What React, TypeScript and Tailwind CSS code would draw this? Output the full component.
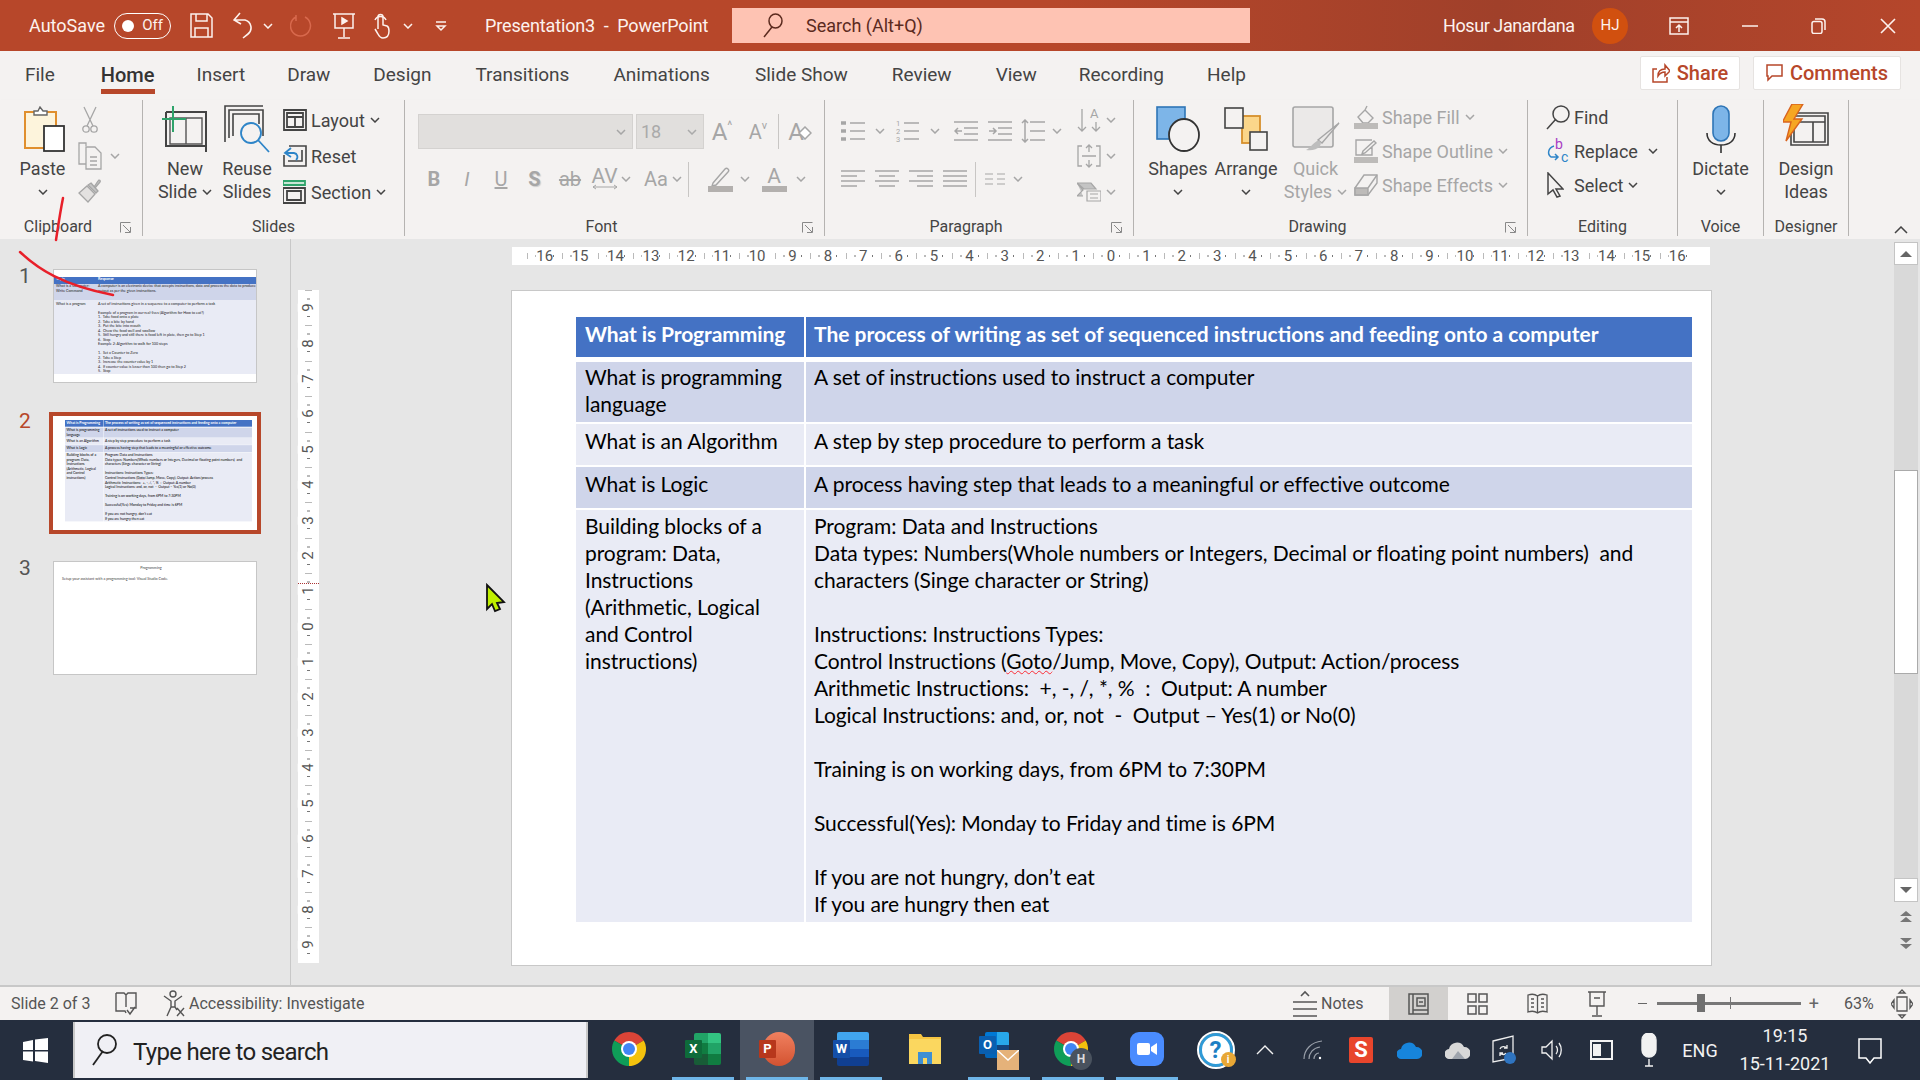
import React from "react";
import clsx from "clsx";

type P = { className?: string };

const Ic = ({ w, h, className, sw = 1.5, children }: { w: number; h: number; className?: string; sw?: number; children: React.ReactNode }) => (
  <svg width={w} height={h} viewBox={`0 0 ${w} ${h}`} fill="none" stroke="currentColor" strokeWidth={sw} className={clsx("shrink-0", className)}>
    {children}
  </svg>
);

const Chev = ({ className }: P) => (
  <Ic w={10} h={6} className={className}>
    <path d="M1 1l4 4 4-4" />
  </Ic>
);

// ---- slide content ----

const tableRows = [
  { dark: true, h: "h-[60px]", pt: "pt-[1px]", left: ["What is programming", "language"], right: ["A set of instructions used to instruct a computer"] },
  { dark: false, h: "h-[41px]", pt: "pt-[3px]", left: ["What is an Algorithm"], right: ["A step by step procedure to perform a task"] },
  { dark: true, h: "h-[41px]", pt: "pt-[3px]", left: ["What is Logic"], right: ["A process having step that leads to a meaningful or effective outcome"] },
  {
    dark: false,
    h: "h-[412px]",
    pt: "pt-[2px]",
    left: ["Building blocks of a", "program: Data,", "Instructions", "(Arithmetic, Logical", "and Control", "instructions)"],
    right: [
      "Program: Data and Instructions",
      "Data types: Numbers(Whole numbers or Integers, Decimal or floating point numbers)  and",
      "characters (Singe character or String)",
      "",
      "Instructions: Instructions Types:",
      "GOTO",
      "Arithmetic Instructions:  +, -, /, *, %  :  Output: A number",
      "Logical Instructions: and, or, not  -  Output \u2013 Yes(1) or No(0)",
      "",
      "Training is on working days, from 6PM to 7:30PM",
      "",
      "Successful(Yes): Monday to Friday and time is 6PM",
      "",
      "If you are not hungry, don\u2019t eat",
      "If you are hungry then eat",
    ],
  },
];

function Lines({ lines }: { lines: string[] }) {
  return (
    <>
      {lines.map((l, i) => (
        <div key={i} className="h-[27px] whitespace-pre">
          {l === "GOTO" ? (
            <>
              Control Instructions (<span className="underline decoration-wavy decoration-red-500 decoration-1">Goto</span>/Jump, Move, Copy), Output: Action/process
            </>
          ) : (
            l
          )}
        </div>
      ))}
    </>
  );
}

function SlideTable() {
  return (
    <div className="w-[1116px] [font-family:Lato,sans-serif] text-[21px] leading-[27px] tracking-[-0.06px] text-black">
      <div className="flex h-[40px] gap-[2px] bg-white font-bold text-white">
        <div className="w-[228px] bg-[#4472c4] pl-[9px] pt-[3px] tracking-[-0.1px] whitespace-pre">What is Programming</div>
        <div className="flex-1 bg-[#4472c4] pl-[8px] pt-[3px] tracking-[0px] whitespace-pre">
          The process of writing as set of sequenced instructions and feeding onto a computer
        </div>
      </div>
      <div className="mt-[5px] flex flex-col gap-[2px]">
        {tableRows.map((r, i) => (
          <div key={i} className={clsx("flex gap-[2px]", r.h)}>
            <div className={clsx("w-[228px] pl-[9px]", r.pt, r.dark ? "bg-[#cfd5ea]" : "bg-[#e9ebf5]")}>
              <Lines lines={r.left} />
            </div>
            <div className={clsx("flex-1 pl-[8px]", r.pt, r.dark ? "bg-[#cfd5ea]" : "bg-[#e9ebf5]")}>
              <Lines lines={r.right} />
            </div>
          </div>
        ))}
      </div>
    </div>
  );
}

function FirstThumb() {
  const steps = [
    "Example of a program in our real-lives (Algorithm for How to eat?)",
    "1.  Take food onto a plate",
    "2.  Take a bite by hand",
    "3.  Put the bite into mouth",
    "4.  Chew the food well and swallow",
    "5.  Still hungry and still there is food left in plate, then go to Step 1",
    "6.  Stop",
    "Example 2: Algorithm to walk for 100 steps",
    "",
    "1.  Set a Counter to Zero",
    "2.  Take a Step",
    "3.  Increase the counter value by 1",
    "4.  If counter value is lesser than 100 then go to Step 2",
    "5.  Stop",
  ];
  return (
    <div className="h-[114px] w-[204px] overflow-hidden border border-[#c6c6c6] bg-white pt-[7px] [font-family:Lato,sans-serif] text-[3.7px] leading-[4.5px] text-[#222]">
      <div className="flex h-[7px] font-bold text-white">
        <div className="w-[42px] bg-[#4472c4] pl-[2px]">Topic</div>
        <div className="flex-1 bg-[#4472c4] pl-[2px]">Response</div>
      </div>
      <div className="flex h-[16px] bg-[#cfd5ea]">
        <div className="w-[42px] pl-[2px]">What is a Computer: Write Command</div>
        <div className="flex-1 pl-[2px]">A computer is an electronic device that accepts instructions, data and process the data to produce output as per the given instructions.</div>
      </div>
      <div className="flex h-[74px] bg-[#e9ebf5] pt-[2px]">
        <div className="w-[42px] pl-[2px]">What is a program</div>
        <div className="flex-1 pl-[2px]">
          <div className="mb-[4px]">A set of instructions given in a sequence to a computer to perform a task</div>
          {steps.map((s, i) => (
            <div key={i} className="h-[4.5px] whitespace-pre">{s}</div>
          ))}
        </div>
      </div>
    </div>
  );
}

function ThumbPanel() {
  return (
    <div className="flex w-[291px] shrink-0 flex-col border-r border-[#c8c8c8] pt-[30px]">
      <div className="flex">
        <div className="w-[53px] pl-[19px] text-[21px] leading-[14px] text-[#555]">1</div>
        <FirstThumb />
      </div>
      <div className="mt-[29px] flex">
        <div className="w-[49px] pl-[19px] text-[21px] leading-[18px] text-[#b7472a]">2</div>
        <div className="h-[122px] w-[212px] overflow-hidden border-[4px] border-[#b7472a] bg-white pl-[12px] pt-[4px]">
          <div className="h-[102px] w-[187px] overflow-hidden">
            <div className="origin-top-left scale-[0.1676]">
              <SlideTable />
            </div>
          </div>
        </div>
      </div>
      <div className="mt-[27px] flex">
        <div className="w-[53px] pl-[19px] text-[21px] leading-[14px] text-[#555]">3</div>
        <div className="h-[114px] w-[204px] border border-[#c6c6c6] bg-white pl-[8px] pt-[3px] [font-family:Lato,sans-serif] text-[3.7px] leading-[5px] text-[#444]">
          <div className="pr-[16px] text-center">Programming</div>
          <div className="mt-[6px]">Setup your assistant with a programming tool: Visual Studio Code.</div>
        </div>
      </div>
    </div>
  );
}

// ---- rulers ----

const rulerH = [16, 15, 14, 13, 12, 11, 10, 9, 8, 7, 6, 5, 4, 3, 2, 1, 0, 1, 2, 3, 4, 5, 6, 7, 8, 9, 10, 11, 12, 13, 14, 15, 16];
const rulerV = [9, 8, 7, 6, 5, 4, 3, 2, 1, 0, 1, 2, 3, 4, 5, 6, 7, 8, 9];

function RulerH() {
  return (
    <div className="ml-[221px] flex h-[18px] w-[1198px] justify-center bg-white text-[15px] leading-[18px] text-[#555]">
      {rulerH.map((n, i) => (
        <div key={i} className="relative w-[35.4px] shrink-0 text-center">
          <svg width="36" height="18" className="absolute left-0 top-0" stroke="#777">
            <path d="M0 6v6M9 8v2M26.5 8v2" />
          </svg>
          <span className="relative bg-white">{n}</span>
        </div>
      ))}
    </div>
  );
}

function RulerV() {
  return (
    <div className="relative ml-[7px] h-[673px] w-[21px] shrink-0 bg-white text-[15px] leading-[21px] text-[#555]">
      {rulerV.map((n, i) => (
        <div key={i} className="relative flex h-[35.4px] items-center justify-center">
          <svg width="21" height="36" className="absolute left-0 top-0" stroke="#777">
            <path d="M7 0h7M9 9h3M9 26.5h3" />
          </svg>
          <span className="relative -rotate-90 bg-white">{n}</span>
        </div>
      ))}
      <div className="absolute left-0 top-[293px] w-[21px] border-t border-dotted border-[#a33]" />
    </div>
  );
}

function ScrollBar() {
  return (
    <div className="mr-[2px] flex w-[24px] shrink-0 flex-col pt-[3px]">
      <div className="flex h-[23px] items-center justify-center border border-[#c4c4c4] bg-white">
        <svg width="12" height="6"><path d="M6 0l6 6H0z" fill="#666" /></svg>
      </div>
      <div className="h-[205px] bg-[#d9d9d9]" />
      <div className="h-[204px] border border-[#aaa] bg-white" />
      <div className="h-[204px] bg-[#d9d9d9]" />
      <div className="flex h-[24px] items-center justify-center border border-[#c4c4c4] bg-white">
        <svg width="12" height="6"><path d="M6 6l6-6H0z" fill="#666" /></svg>
      </div>
      <div className="mt-[9px] flex justify-center">
        <svg width="12" height="12" fill="#777"><path d="M6 0l6 5H0zM6 6l6 5H0z" /></svg>
      </div>
      <div className="mt-[14px] flex justify-center">
        <svg width="12" height="12" fill="#777"><path d="M6 6l6-5H0zM6 12l6-5H0z" /></svg>
      </div>
    </div>
  );
}

function Workspace() {
  return (
    <div className="flex h-[748px] border-b-2 border-[#c8c8c8] bg-[#e6e6e6]">
      <ThumbPanel />
      <div className="flex flex-1 flex-col pt-[8px]">
        <RulerH />
        <div className="mt-[25px] flex">
          <RulerV />
          <div className="ml-[192px] h-[676px] w-[1201px] shrink-0 border border-[#c8c8c8] bg-white pl-[64px] pt-[26px]">
            <SlideTable />
          </div>
        </div>
      </div>
      <ScrollBar />
    </div>
  );
}

// ---- title bar ----

function TitleBar() {
  return (
    <div className="flex h-[51px] items-center bg-linear-to-r from-[#b7472a] from-55% via-[#a0402a] via-78% to-[#b5462b] pl-[29px] text-[18px] text-[#fdf2ee]">
      <span className="w-[76px]">AutoSave</span>
      <div className="ml-[9px] flex h-[26px] w-[57px] items-center justify-between rounded-full border border-white pl-[7px] pr-[7px] text-[15px]">
        <span className="h-[12px] w-[12px] rounded-full bg-white" />
        <span>Off</span>
      </div>
      <Ic w={23} h={25} className="ml-[19px]">
        <path d="M1 1h17l4 4v19H1zM6 1v7h11V1M5 24v-9h13v9" />
      </Ic>
      <Ic w={23} h={27} className="ml-[20px]" sw={1.6}>
        <path d="M7 1L1 8l7 4M1 8h11a8 8 0 0 1 3 14l-5 4" />
      </Ic>
      <Chev className="ml-[7px]" />
      <Ic w={23} h={24} className="ml-[17px] text-[#d8694d]">
        <path d="M15 3a10 10 0 1 1-9 0M6 1v6" />
      </Ic>
      <Ic w={22} h={26} className="ml-[20px]">
        <path d="M0 1h22M2 1v14h18V1M11 15v9M5 25h12" />
        <path d="M9 5l5 3-5 3z" fill="currentColor" />
      </Ic>
      <Ic w={18} h={27} className="ml-[17px]">
        <path d="M6 17V5a2.5 2.5 0 0 1 5 0v8l4 1c2 1 2 3 2 5 0 4-2 7-6 7-3 0-4-2-5-4l-3-5" />
        <path d="M3 8a6 6 0 0 1 11 0" />
      </Ic>
      <Chev className="ml-[13px]" />
      <Ic w={12} h={12} className="ml-[22px]">
        <path d="M1 2h10M2 6h8l-4 4z" />
      </Ic>
      <span className="ml-[38px] w-[247px] whitespace-pre tracking-[-0.14px]">Presentation3  -  PowerPoint</span>
      <div className="flex h-[35px] w-[518px] items-center bg-[#fec3b3] text-[#5b2a1e]">
        <Ic w={20} h={25} className="ml-[31px]">
          <path d="M1 24l8-10" />
          <ellipse cx="12.5" cy="8" rx="6.5" ry="7" />
        </Ic>
        <span className="ml-[23px]">Search (Alt+Q)</span>
      </div>
      <span className="ml-[193px] w-[133px] whitespace-nowrap tracking-[-0.42px]">Hosur Janardana</span>
      <div className="ml-[16px] flex h-[36px] w-[36px] items-center justify-center rounded-full bg-[#d1500f] text-[15px]">HJ</div>
      <Ic w={20} h={18} className="ml-[41px]">
        <path d="M1 1h18v16H1zM1 5h18M10 15V8M7 11l3-3 3 3" />
      </Ic>
      <Ic w={16} h={2} className="ml-[53px]">
        <path d="M0 1h16" />
      </Ic>
      <Ic w={15} h={16} className="ml-[53px]">
        <rect x="1" y="3.5" width="10" height="12" rx="2" />
        <path d="M4 1h7a3 3 0 0 1 3 3v8" />
      </Ic>
      <Ic w={16} h={16} className="ml-[54px]" sw={1.6}>
        <path d="M1 1l14 14M15 1L1 15" />
      </Ic>
    </div>
  );
}

const tabs = [
  ["File", "ml-[25px]"],
  ["Home", "ml-[46px]"],
  ["Insert", "ml-[42px]"],
  ["Draw", "ml-[42px]"],
  ["Design", "ml-[43px]"],
  ["Transitions", "ml-[44px]"],
  ["Animations", "ml-[44px]"],
  ["Slide Show", "ml-[45px]"],
  ["Review", "ml-[44px]"],
  ["View", "ml-[44px]"],
  ["Recording", "ml-[42px]"],
  ["Help", "ml-[43px]"],
];

function TabRow() {
  return (
    <div className="flex h-[49px] bg-[#f4f2f1] text-[#444] text-[19px]">
      {tabs.map(([t, m]) => (
        <div
          key={t}
          className={clsx(
            "flex h-[43px] items-center whitespace-nowrap pt-[5px]",
            m,
            t === "Home" && "border-b-[5px] border-[#b7472a] pt-[10px] text-[20px] font-medium text-[#333]"
          )}
        >
          {t}
        </div>
      ))}
      <div className="ml-auto mr-[19px] mt-[5px] flex h-[34px] gap-[13px] text-[20px] font-medium text-[#b7472a]">
        <div className="flex w-[100px] items-center justify-center gap-[7px] rounded-[2px] border border-[#e6e3e1] bg-white">
          <Ic w={18} h={20}>
            <path d="M5 6H1v13h14v-5M6 13c0-5 3-7 7-7V2l5 6-5 5V9c-3 0-5 1-7 4z" />
          </Ic>
          Share
        </div>
        <div className="flex w-[148px] items-center justify-center gap-[7px] rounded-[2px] border border-[#e6e3e1] bg-white">
          <Ic w={17} h={18}>
            <path d="M1 1h15v11H6l-4 4v-4H1z" />
          </Ic>
          Comments
        </div>
      </div>
    </div>
  );
}

// ---- ribbon ----

const Launcher = () => (
  <Ic w={11} h={11} sw={1} className="text-[#888]">
    <path d="M0.5 10.5v-10h10M3 3l7 7M10.5 5v5.5H5" />
  </Ic>
);

function Group({ className, label, launcher, children }: { className: string; label: string; launcher?: boolean; children: React.ReactNode }) {
  return (
    <div className={clsx("flex h-[136px] shrink-0 flex-col border-r border-[#b5b3b1]", className)}>
      <div className="flex h-[118px]">{children}</div>
      <div className="flex h-[18px] items-center text-[16px] leading-[18px] text-[#444]">
        <span className={clsx("flex-1 text-center", launcher && "ml-[-4px]")}>{label}</span>
        {launcher && (
          <span className="mr-[4px] w-[18px]">
            <Launcher />
          </span>
        )}
      </div>
    </div>
  );
}

function BigButton({ className, icon, lines, chev, dim }: { className?: string; icon: React.ReactNode; lines: string[]; chev?: boolean; dim?: boolean }) {
  return (
    <div className={clsx("flex shrink-0 flex-col items-center leading-[23px]", dim && "text-[#a6a6a6]", className)}>
      <div className="flex h-[57px] items-center justify-center">{icon}</div>
      {lines.map((l, i) => (
        <div key={i} className="flex h-[23px] items-center gap-[5px] whitespace-nowrap">
          {l}
          {chev && i === 1 && <Chev />}
        </div>
      ))}
      {lines.length === 1 && (
        <div className="flex h-[23px] items-center">
          <Chev />
        </div>
      )}
    </div>
  );
}

function SmallRow({ icon, label, chev, className }: { icon: React.ReactNode; label: string; chev?: boolean; className?: string }) {
  return (
    <div className={clsx("flex items-center whitespace-nowrap", className)}>
      <span className="flex w-[28px] shrink-0 justify-start">{icon}</span>
      {label}
      {chev && <Chev className="ml-[5px]" />}
    </div>
  );
}

const G = ({ w, children, className }: { w: string; children?: React.ReactNode; className?: string }) => (
  <span className={clsx("flex shrink-0 items-center justify-center", w, className)}>{children}</span>
);

function BulletIcon({ numbered }: { numbered?: boolean }) {
  return (
    <Ic w={24} h={24} sw={1.5}>
      <path d="M9 4h15M9 12h15M9 20h15" />
      {numbered ? (
        <g fill="currentColor" stroke="none" fontSize="7.5">
          <text x="1" y="7">1</text>
          <text x="1" y="15">2</text>
          <text x="1" y="23">3</text>
        </g>
      ) : (
        <path d="M0 4h5M0 12h5M0 20h5" strokeWidth="3.5" />
      )}
    </Ic>
  );
}

function AlignIcon({ d }: { d: string }) {
  return (
    <Ic w={24} h={20}>
      <path d={d} />
    </Ic>
  );
}

function Ribbon() {
  return (
    <div className="flex h-[139px] bg-[#f4f2f1] text-[18px] text-[#444] shadow-[0_3px_4px_rgba(0,0,0,0.12)]">
      <Group className="w-[143px]" label="Clipboard" launcher>
        <BigButton
          className="ml-[21px] w-[43px]"
          lines={["Paste"]}
          icon={
            <svg width="42" height="46" fill="none" className="ml-[5px]">
              <rect x="1" y="6" width="31" height="36" fill="#fdf4dc" stroke="#e08f2e" strokeWidth="2" />
              <path d="M10 9V5h4l2-4 3 4h4v4z" fill="#fff" stroke="#666" strokeWidth="1.4" />
              <rect x="20" y="20" width="20" height="25" fill="#fff" stroke="#333" strokeWidth="1.8" />
            </svg>
          }
        />
        <div className="ml-[9px] mt-[2px] flex w-[52px] flex-col text-[#a6a6a6]">
          <G w="w-[34px]" className="h-[36px]">
            <Ic w={16} h={28} sw={1.3}>
              <path d="M2 1l9 19M14 1L5 20" />
              <circle cx="4" cy="23" r="3.2" />
              <circle cx="12" cy="23" r="3.2" />
            </Ic>
          </G>
          <div className="flex h-[36px] items-center">
            <G w="w-[34px]">
              <Ic w={24} h={28} sw={1.3}>
                <path d="M8 4V1H1v21h7M8 5h9l6 6v16H8zM12 15h7M12 19h7M12 23h7" />
              </Ic>
            </G>
            <Chev className="ml-[3px]" />
          </div>
          <G w="w-[34px]" className="h-[32px]">
            <svg width="24" height="25" fill="none" stroke="#a6a6a6" strokeWidth="1.3">
              <path d="M16 9l4-6c1-2 3 0 2 1l-5 6z" fill="#c4c4c4" />
              <path d="M13 5l7 8-2 2-8-8z" fill="#c4c4c4" />
              <path d="M9 8l8 8-7 8-9-9z" fill="#e3e1e0" />
            </svg>
          </G>
        </div>
      </Group>

      <Group className="w-[262px]" label="Slides">
        <BigButton
          className="ml-[11px] w-[62px]"
          lines={["New", "Slide"]}
          chev
          icon={
            <svg width="46" height="46" fill="none">
              <path d="M4 8h40v40M4 8v34h40" stroke="#444" strokeWidth="2" transform="translate(0 -2)" />
              <path d="M8 12h32v26H8zM24 12v26" stroke="#555" strokeWidth="1.4" />
              <path d="M11 0v26M0 13h24" stroke="#2fa36b" strokeWidth="2" />
            </svg>
          }
        />
        <BigButton
          className="w-[62px]"
          lines={["Reuse", "Slides"]}
          icon={
            <svg width="46" height="50" fill="none" stroke="#444" strokeWidth="1.6">
              <path d="M1 38V2h38M5 34V6h34v26" />
              <path d="M9 32V10h26v10" />
              <circle cx="27" cy="29" r="10" stroke="#2e85c8" fill="#f4f2f1" strokeWidth="1.8" />
              <path d="M34 36l11 12" stroke="#2e85c8" strokeWidth="1.8" />
            </svg>
          }
        />
        <div className="ml-[5px] mt-[2px] flex flex-col">
          <SmallRow
            className="h-[36px]"
            label="Layout"
            chev
            icon={
              <Ic w={24} h={22} sw={1.8}>
                <path d="M1 1h22v20H1zM4 4h16v14H4zM4 8h16M12 8v10" />
              </Ic>
            }
          />
          <SmallRow
            className="h-[36px]"
            label="Reset"
            icon={
              <svg width="24" height="22" fill="none" stroke="#444" strokeWidth="1.6">
                <path d="M6 1h17v20H1V10M5 16h14V5" />
                <path d="M8 3L2 8l6 4M2 8h9a4 4 0 0 1 2 7" stroke="#2e85c8" strokeWidth="1.8" />
              </svg>
            }
          />
          <SmallRow
            className="h-[36px]"
            label="Section"
            chev
            icon={
              <svg width="24" height="24" fill="none" strokeWidth="1.8">
                <path d="M0 1h22v4H0z" stroke="#2fa36b" fill="#c9e6d5" />
                <path d="M0 8h22v15H0zM4 11h14v9H4z" stroke="#444" />
              </svg>
            }
          />
        </div>
      </Group>

      <Group className="w-[420px]" label="Font" launcher>
        <div className="ml-[13px] flex flex-col text-[#a6a6a6]">
          <div className="mt-[14px] flex h-[35px] items-center">
            <div className="flex h-[35px] w-[215px] items-center justify-end border border-[#d4d2d0] bg-[#e1dfdd] pr-[6px]">
              <Chev />
            </div>
            <div className="ml-[3px] flex h-[35px] w-[68px] items-center justify-between border border-[#d4d2d0] bg-[#e1dfdd] pl-[4px] pr-[6px] text-[#aaa]">
              18
              <Chev />
            </div>
            <G w="w-[34px]" className="ml-[1px] text-[24px]">
              A<sup className="text-[12px]">^</sup>
            </G>
            <G w="w-[34px]" className="ml-[2px] text-[20px]">
              A<sup className="text-[11px]">v</sup>
            </G>
            <span className="ml-[3px] h-[35px] w-px bg-[#c8c6c4]" />
            <G w="w-[34px]" className="text-[24px]">
              <span className="relative">
                A
                <svg width="14" height="14" className="absolute -right-[8px] top-[12px]">
                  <path d="M1 7l6-6 6 6-6 6z" fill="#fff" stroke="#a6a6a6" strokeWidth="1.5" />
                </svg>
              </span>
            </G>
          </div>
          <div className="mt-[12px] flex h-[36px] items-center text-[20px]">
            <G w="w-[32px]" className="font-bold">B</G>
            <G w="w-[34px]" className="italic">I</G>
            <G w="w-[34px]" className="underline">U</G>
            <G w="w-[33px]" className="font-bold [text-shadow:1px_1px_1px_#ccc]">S</G>
            <G w="w-[38px]" className="line-through">ab</G>
            <G w="w-[31px]">
              <span className="flex flex-col items-center text-[21px] leading-[17px]">
                AV
                <Ic w={24} h={6} sw={1} className="-mt-[1px]">
                  <path d="M0 3h24M3 1L0 3l3 2M21 1l3 2-3 2" />
                </Ic>
              </span>
            </G>
            <Chev className="ml-[1px]" />
            <G w="w-[32px]" className="ml-[9px]">Aa</G>
            <Chev className="ml-[0px]" />
            <span className="ml-[6px] h-[35px] w-px bg-[#c8c6c4]" />
            <G w="w-[38px]" className="ml-[12px]">
              <svg width="25" height="26" fill="none">
                <path d="M5 17L17 3c2-2 5 1 3 3L8 19l-4 1z" stroke="#a6a6a6" strokeWidth="1.4" />
                <rect x="0" y="20" width="25" height="6" fill="#b3b0ae" />
              </svg>
            </G>
            <Chev className="ml-[1px]" />
            <G w="w-[26px]" className="ml-[11px]">
              <span className="relative flex flex-col items-center text-[21px] leading-[20px]">
                A
                <span className="h-[6px] w-[25px] bg-[#b3b0ae]" />
              </span>
            </G>
            <Chev className="ml-[9px]" />
          </div>
        </div>
      </Group>

      <Group className="w-[309px]" label="Paragraph" launcher>
        <div className="ml-[16px] flex w-[236px] flex-col text-[#a6a6a6]">
          <div className="mt-[18px] flex h-[26px] items-center">
            <BulletIcon />
            <Chev className="ml-[10px]" />
            <span className="ml-[10px]"><BulletIcon numbered /></span>
            <Chev className="ml-[11px]" />
            <Ic w={24} h={24} className="ml-[14px]">
              <path d="M0 3h24M10 9h14M10 15h14M0 21h24M8 12H1M4 9l-3 3 3 3" />
            </Ic>
            <Ic w={24} h={24} className="ml-[10px]">
              <path d="M0 3h24M10 9h14M10 15h14M0 21h24M1 12h7M5 9l3 3-3 3" />
            </Ic>
            <Ic w={24} h={24} className="ml-[9px]">
              <path d="M9 3h15M9 12h15M9 21h15M4 1v22M1 4l3-3 3 3M1 20l3 3 3-3" />
            </Ic>
            <Chev className="ml-[7px]" />
          </div>
          <div className="mt-[22px] flex h-[26px] items-center">
            <AlignIcon d="M0 2h24M0 7h16M0 12h24M0 17h16" />
            <span className="ml-[10px]"><AlignIcon d="M0 2h24M4 7h16M0 12h24M4 17h16" /></span>
            <span className="ml-[10px]"><AlignIcon d="M0 2h24M8 7h16M0 12h24M8 17h16" /></span>
            <span className="ml-[10px]"><AlignIcon d="M0 2h24M0 7h24M0 12h24M0 17h24" /></span>
            <span className="ml-[8px] h-[35px] w-px bg-[#c8c6c4]" />
            <Ic w={20} h={14} sw={1.2} className="ml-[9px]">
              <path d="M0 2h8M12 2h8M0 7h8M12 7h8M0 12h8M12 12h8" />
            </Ic>
            <Chev className="ml-[8px]" />
          </div>
        </div>
        <div className="mt-[2px] flex flex-col text-[#a6a6a6]">
          <div className="flex h-[36px] items-center gap-[5px]">
            <Ic w={24} h={28} sw={1.3}>
              <path d="M5 3v22M1 21l4 4 4-4M19 16v9M15 21l4 4 4-4" />
              <text x="13" y="12" fontSize="13" fill="#a6a6a6" stroke="none">A</text>
            </Ic>
            <Chev />
          </div>
          <div className="flex h-[36px] items-center gap-[5px]">
            <Ic w={24} h={24} sw={1.3}>
              <path d="M5 2H1v20h4M19 2h4v20h-4M5 12h14M12 1v7M9 4l3-3 3 3M12 23v-7M9 20l3 3 3-3" />
            </Ic>
            <Chev />
          </div>
          <div className="flex h-[36px] items-center gap-[5px]">
            <Ic w={24} h={20} sw={1.2}>
              <path d="M0 1h14l5 6H7zM0 1l6 7-6 6h6" fill="#c4c4c4" />
              <path d="M10 9h14v10H10zM13 12h8M13 16h8" fill="#f4f2f1" />
            </Ic>
            <Chev />
          </div>
        </div>
      </Group>

      <Group className="w-[394px]" label="Drawing" launcher>
        <BigButton
          className="ml-[10px] w-[68px]"
          lines={["Shapes"]}
          icon={
            <svg width="44" height="46">
              <rect x="1" y="1" width="28" height="32" fill="#7db5e8" stroke="#2e75b6" strokeWidth="1.6" />
              <ellipse cx="28" cy="29" rx="15" ry="16" fill="#f4f2f1" stroke="#333" strokeWidth="1.8" />
            </svg>
          }
        />
        <BigButton
          className="w-[68px]"
          lines={["Arrange"]}
          icon={
            <svg width="44" height="44" fill="none">
              <rect x="18" y="9" width="18" height="27" fill="#fbd68a" stroke="#d6902c" strokeWidth="1.8" />
              <rect x="1" y="1" width="18" height="20" fill="#f4f2f1" stroke="#444" strokeWidth="1.6" />
              <rect x="26" y="25" width="17" height="18" fill="#f4f2f1" stroke="#444" strokeWidth="1.6" />
            </svg>
          }
        />
        <BigButton
          dim
          className="w-[71px]"
          lines={["Quick", "Styles"]}
          chev
          icon={
            <svg width="48" height="48" fill="none">
              <rect x="1" y="2" width="40" height="40" rx="2" fill="#ebe9e8" stroke="#a6a6a6" strokeWidth="1.6" />
              <path d="M47 18L30 38l-4-3z" fill="#ebe9e8" stroke="#a6a6a6" strokeWidth="1.4" />
              <path d="M25 36c3-1 5 2 3 5-3 4-9 5-14 4 4-2 6-6 11-9z" fill="#bdbdbd" />
            </svg>
          }
        />
        <div className="ml-[3px] flex flex-col text-[#a6a6a6]">
          <SmallRow
            className="h-[34px]"
            label="Shape Fill"
            chev
            icon={
              <svg width="24" height="24" fill="none" stroke="#a6a6a6" strokeWidth="1.4">
                <path d="M4 12l7-7 8 8-5 5H9zM11 5l2-4" />
                <rect x="0" y="18" width="24" height="6" fill="#bdbbb9" stroke="none" />
              </svg>
            }
          />
          <SmallRow
            className="h-[34px]"
            label="Shape Outline"
            chev
            icon={
              <svg width="24" height="24" fill="none" stroke="#a6a6a6" strokeWidth="1.4">
                <path d="M18 1H2v15h16V8M9 12L20 2l2 2-11 10-3 1z" />
                <rect x="0" y="18" width="24" height="6" fill="#bdbbb9" stroke="none" />
              </svg>
            }
          />
          <SmallRow
            className="h-[34px]"
            label="Shape Effects"
            chev
            icon={
              <svg width="24" height="22" stroke="#a6a6a6" strokeWidth="1.4">
                <path d="M1 14L10 1h13v8l-9 12H1z" fill="#f4f2f1" />
                <path d="M1 14h13v7H1zM14 14l9-13" fill="#bdbbb9" />
              </svg>
            }
          />
        </div>
      </Group>

      <Group className="w-[150px]" label="Editing">
        <div className="ml-[18px] flex flex-col">
          <SmallRow
            className="h-[34px]"
            label="Find"
            icon={
              <Ic w={24} h={25}>
                <path d="M1 24l9-10" />
                <ellipse cx="15" cy="9" rx="8" ry="8" />
              </Ic>
            }
          />
          <SmallRow
            className="h-[34px]"
            label="Replace"
            icon={
              <svg width="24" height="26" fill="none" strokeWidth="1.5">
                <text x="9" y="11" fontSize="14" fill="#a83cc4" stroke="none">b</text>
                <text x="15" y="24" fontSize="14" fill="#2e85c8" stroke="none">c</text>
                <path d="M8 8C2 10 1 16 5 19h7M9 16l3 3-3 3" stroke="#2e85c8" />
              </svg>
            }
          />
          <SmallRow
            className="h-[34px]"
            label="Select"
            chev
            icon={
              <Ic w={18} h={26}>
                <path d="M2 1v21l5-4 4 7 3-1-4-7h7z" />
              </Ic>
            }
          />
        </div>
        <Chev className="ml-[10px] mt-[48px]" />
      </Group>

      <Group className="w-[86px]" label="Voice">
        <BigButton
          className="w-[85px]"
          lines={["Dictate"]}
          icon={
            <svg width="30" height="48" fill="none">
              <rect x="7" y="1" width="16" height="35" rx="8" fill="#7db5e8" stroke="#2e75b6" strokeWidth="1.6" />
              <path d="M1 28c0 8 6 12 14 12s14-4 14-12M15 40v8" stroke="#333" strokeWidth="1.6" />
            </svg>
          }
        />
      </Group>

      <Group className="w-[85px]" label="Designer">
        <BigButton
          className="w-[84px]"
          lines={["Design", "Ideas"]}
          icon={
            <svg width="46" height="50" fill="none">
              <path d="M8 9h37v32H8zM11 12h31v26H11zM11 18h31M30 18v20" stroke="#444" strokeWidth="1.6" />
              <path d="M20 0H9L0 17l0 1h8L3 37l16-22h-8z" fill="#f6a623" stroke="#d9641e" strokeWidth="1.4" />
            </svg>
          }
        />
      </Group>

      <div className="flex flex-1 items-end justify-end pb-[5px] pr-[12px]">
        <Ic w={14} h={8}>
          <path d="M1 7l6-6 6 6" />
        </Ic>
      </div>
    </div>
  );
}

// ---- status bar ----

function StatusBar() {
  return (
    <div className="flex h-[33px] items-center bg-[#f4f2f1] text-[16px] text-[#555]">
      <span className="ml-[11px] w-[77px] whitespace-nowrap">Slide 2 of 3</span>
      <Ic w={22} h={26} className="ml-[27px]" sw={1.4}>
        <path d="M1 2h8l2 2 2-2h8v15l-6 0M1 2v18h9l1 2M11 4v12M12 19l3 4 5-7" />
      </Ic>
      <Ic w={24} h={28} className="ml-[25px]" sw={1.4}>
        <circle cx="11" cy="4" r="3" />
        <path d="M2 6l7 5v6l-4 9M20 6l-7 5v6l2 3M9 17h4M15 18l7 8M22 18l-7 8" />
      </Ic>
      <span className="ml-[3px] whitespace-nowrap">Accessibility: Investigate</span>

      <Ic w={24} h={28} className="ml-auto" sw={1.6}>
        <path d="M8 6l4-4 4 4M0 12h24M0 19h24M0 26h24" />
      </Ic>
      <span className="ml-[4px] w-[68px]">Notes</span>
      <div className="flex h-[33px] w-[59px] items-center justify-center bg-[#d2d0ce]">
        <Ic w={21} h={22} sw={1.5}>
          <path d="M1 1h19v20H1zM5 1v20M5 17h15M9 5h8v8H9zM11 9h4" />
        </Ic>
      </div>
      <div className="flex w-[59px] justify-center">
        <Ic w={21} h={22} sw={1.5}>
          <path d="M1 1h8v8H1zM12 1h8v8h-8zM1 13h8v8H1zM12 13h8v8h-8z" />
        </Ic>
      </div>
      <div className="flex w-[60px] justify-center">
        <Ic w={21} h={22} sw={1.3}>
          <path d="M10.5 3C8 1 4 1 1 2v17c3-1 7-1 9.5 1 2.5-2 6.500-2 9.500-1V2c-3-1-7-1-9.500 1zM10.500 3v17M4 6h3M4 10h3M4 14h3M14 6h3M14 10h3M14 14h3" />
        </Ic>
      </div>
      <div className="flex w-[60px] justify-center">
        <Ic w={20} h={26} sw={1.4}>
          <path d="M1 1h18M3 1v14h14V1M10 15v9M5 25h10M7 7h6" />
        </Ic>
      </div>
      <div className="ml-[11px] flex w-[181px] items-center text-[#666]">
        <span className="h-[1.5px] w-[9px] bg-[#666]" />
        <div className="relative ml-[10px] h-[3px] w-[148px] bg-[#777]">
          <span className="absolute left-[40px] top-[-8px] h-[18px] w-[8px] bg-[#707070]" />
          <span className="absolute left-[73px] top-[-5px] h-[12px] w-[1.5px] bg-[#777]" />
        </div>
        <span className="ml-[8px] text-[18px] leading-none">+</span>
      </div>
      <span className="ml-[25px] w-[47px] whitespace-nowrap">63%</span>
      <Ic w={22} h={30} className="mr-[7px]" sw={1.3}>
        <path d="M6 8h10v14H6zM11 1L8 4h6zM11 29l-3-3h6zM3 11l-3 4 3 4zM19 11l3 4-3 4z" />
      </Ic>
    </div>
  );
}

// ---- taskbar ----

const Tile = ({ letter, className }: { letter: string; className: string }) => (
  <span className={clsx("flex h-[18px] w-[17px] items-center justify-center rounded-[1px] text-[13px] font-bold leading-none text-white", className)}>{letter}</span>
);

function TbApp({ children, open, active }: { children: React.ReactNode; open?: boolean; active?: boolean }) {
  return (
    <div className={clsx("flex h-[60px] w-[74px] shrink-0 flex-col items-center", active && "bg-[#4a5362]")}>
      <div className="flex h-[57px] items-center justify-center">{children}</div>
      {open && <div className="h-[3px] w-[62px] bg-[#6eb5e8]" />}
    </div>
  );
}

const ChromeLogo = () => (
  <svg width="34" height="34" viewBox="0 0 34 34">
    <path d="M17 17L2.28 8.500A17 17 0 0 1 31.720 8.500Z" fill="#db4437" />
    <path d="M17 17L31.720 8.500A17 17 0 0 1 17 34Z" fill="#f4c20d" />
    <path d="M17 17L17 34A17 17 0 0 1 2.280 8.500Z" fill="#0f9d58" />
    <circle cx="17" cy="17" r="8" fill="#fff" />
    <circle cx="17" cy="17" r="6" fill="#4285f4" />
  </svg>
);

const Tray = ({ children }: { children: React.ReactNode }) => <div className="flex h-[60px] w-[48px] shrink-0 items-center justify-center text-[#f2f2f2]">{children}</div>;

function Taskbar() {
  return (
    <div className="flex h-[60px] bg-[#252e3e] text-white">
      <div className="flex w-[73px] items-center justify-center pr-[3px]">
        <svg width="25" height="25" fill="#fff">
          <path d="M0 4l10-2v10H0zM12 1.500L25 0v12H12zM0 13.500h10v10L0 22zM12 13.500h13V25l-13-2z" />
        </svg>
      </div>
      <div className="flex h-[56px] w-[515px] items-center self-center border-x-2 border-[#c8c8c8] bg-[#f0f0f5] pl-[17px] text-[24px] text-[#222]">
        <Ic w={25} h={32} sw={1.8}>
          <path d="M1 31l10-14" />
          <ellipse cx="15" cy="10" rx="9" ry="9" />
        </Ic>
        <span className="ml-[16px] whitespace-nowrap pt-[4px] tracking-[-0.7px]">Type here to search</span>
      </div>
      <div className="w-[4px]" />
      <TbApp>
        <ChromeLogo />
      </TbApp>
      <TbApp open>
        <span className="relative flex h-[32px] w-[36px] items-center">
          <span className="ml-[9px] grid h-[32px] w-[27px] grid-cols-2 grid-rows-3 overflow-hidden rounded-[2px]">
            <span className="bg-[#21a366]" />
            <span className="bg-[#33c481]" />
            <span className="bg-[#107c41]" />
            <span className="bg-[#21a366]" />
            <span className="bg-[#185c37]" />
            <span className="bg-[#107c41]" />
          </span>
          <Tile letter="X" className="absolute left-0 top-[7px] bg-[#0e6b3a]" />
        </span>
      </TbApp>
      <TbApp open active>
        <span className="relative flex h-[34px] w-[36px] items-center">
          <span className="ml-[4px] h-[34px] w-[32px] rounded-full bg-linear-to-b from-[#f0805f] to-[#d35230]" />
          <Tile letter="P" className="absolute left-0 top-[8px] bg-[#b7371c]" />
        </span>
      </TbApp>
      <TbApp open>
        <span className="relative flex h-[34px] w-[36px] items-center">
          <span className="ml-[4px] flex h-[34px] w-[32px] flex-col overflow-hidden rounded-[2px]">
            <span className="flex-1 bg-[#41a5ee]" />
            <span className="flex-1 bg-[#2b7cd3]" />
            <span className="flex-1 bg-[#185abd]" />
            <span className="flex-1 bg-[#103f91]" />
          </span>
          <Tile letter="W" className="absolute left-0 top-[8px] bg-[#144fa8]" />
        </span>
      </TbApp>
      <TbApp>
        <svg width="32" height="30">
          <path d="M0 0h12l2 3h18v27H0z" fill="#f6c542" />
          <path d="M0 5h32v25H0z" fill="#fbd75f" />
          <path d="M9 30V18h14v12h-5v-6h-4v6z" fill="#3e8fd4" />
        </svg>
      </TbApp>
      <TbApp open>
        <span className="relative flex h-[34px] w-[40px] items-center">
          <span className="ml-[6px] mb-[8px] grid h-[26px] w-[24px] grid-cols-2 overflow-hidden rounded-[2px]">
            <span className="bg-[#0078d4]" />
            <span className="bg-[#28a8ea]" />
            <span className="bg-[#0364b8]" />
            <span className="bg-[#14447d]" />
          </span>
          <Tile letter="O" className="absolute left-0 top-[4px] bg-[#0a5fb0]" />
          <svg width="22" height="20" className="absolute bottom-[-4px] right-0">
            <path d="M0 0h22v20H0z" fill="#e5b27a" />
            <path d="M0 0l11 10L22 0" fill="none" stroke="#fff" strokeWidth="1.4" />
          </svg>
        </span>
      </TbApp>
      <TbApp open>
        <span className="relative h-[34px] w-[38px]">
          <ChromeLogo />
          <span className="absolute bottom-[-4px] right-0 flex h-[22px] w-[22px] items-center justify-center rounded-full bg-[#49525e] text-[12px] font-bold text-[#ddd]">H</span>
        </span>
      </TbApp>
      <TbApp open>
        <span className="flex h-[34px] w-[34px] items-center justify-center rounded-[9px] bg-[#4a8cff]">
          <svg width="20" height="12" fill="#fff">
            <rect width="13" height="12" rx="2" />
            <path d="M14 4l6-4v12l-6-4z" />
          </svg>
        </span>
      </TbApp>
      <div className="flex w-[57px] shrink-0 items-center justify-center pl-[6px]">
        <span className="relative flex h-[34px] w-[34px] items-center justify-center rounded-full border-[3px] border-[#2f9ad6] bg-white text-[24px] font-bold leading-none text-[#1d7fc4] outline-2 outline-white">
          ?
          <span className="absolute bottom-[-3px] right-[-6px] flex h-[15px] w-[15px] items-center justify-center rounded-full bg-[#e8a735] text-[10px] text-white">i</span>
        </span>
      </div>
      <Tray>
        <Ic w={18} h={10} sw={1.4}>
          <path d="M1 9l8-8 8 8" />
        </Ic>
      </Tray>
      <Tray>
        <Ic w={20} h={20} sw={1.2} className="text-[#9aa0aa]">
          <path d="M1 19C1 10 8 2 19 1M6 19c0-6 4-11 11-12M11 19c0-3 2-6 5-6" />
          <circle cx="17" cy="18" r="1.200" fill="#fff" stroke="none" />
        </Ic>
      </Tray>
      <Tray>
        <span className="flex h-[26px] w-[24px] items-center justify-center rounded-[2px] bg-[#e8452c] text-[22px] font-bold leading-none text-white">S</span>
      </Tray>
      <Tray>
        <svg width="25" height="18" fill="#1785dc">
          <path d="M5 18a5 5 0 0 1-1-10 8 8 0 0 1 15-2 6 6 0 0 1 1 12z" />
        </svg>
      </Tray>
      <Tray>
        <svg width="25" height="18">
          <path d="M5 18a5 5 0 0 1-1-10 8 8 0 0 1 15-2 6 6 0 0 1 1 12z" fill="#d8d8d8" />
          <path d="M7 18l6-8 7 8z" fill="#9ea4ad" />
        </svg>
      </Tray>
      <Tray>
        <svg width="26" height="30" fill="none" stroke="#eee" strokeWidth="1.300">
          <path d="M1 6l20-5v22l-20 4zM8 14c1-3 5-3 7-1M15 10v3h-3M14 18c-1 2-4 2-6 0M8 21v-3h3" />
          <circle cx="18" cy="23" r="6" fill="#2f74c0" stroke="none" />
        </svg>
      </Tray>
      <Tray>
        <Ic w={24} h={24} sw={1.300}>
          <path d="M1 9h4l6-6v18l-6-6H1zM15 8c2 2 2 6 0 8M18 5c3 4 3 10 0 14" />
        </Ic>
      </Tray>
      <Tray>
        <span className="flex h-[20px] w-[23px] items-center border-2 border-[#f2f2f2] pl-[1px]">
          <span className="h-[12px] w-[8px] bg-[#f2f2f2]" />
        </span>
      </Tray>
      <Tray>
        <svg width="16" height="34" fill="none" stroke="#f2f2f2" strokeWidth="1.400">
          <rect x="1" y="0" width="14" height="24" rx="7" fill="#f2f2f2" />
          <path d="M8 26v7M4 33h8" />
        </svg>
      </Tray>
      <div className="flex w-[54px] shrink-0 items-center justify-center text-[18px] text-[#f2f2f2]">ENG</div>
      <div className="flex w-[116px] shrink-0 flex-col items-center text-[18px] leading-[28px] text-[#f2f2f2]">
        <span className="mt-[2px]">19:15</span>
        <span>15-11-2021</span>
      </div>
      <div className="flex w-[54px] shrink-0 items-center justify-center pt-[2px]">
        <Ic w={24} h={26} sw={1.500}>
          <path d="M1 1h22v19h-7l-4 5-4-5H1z" />
        </Ic>
      </div>
    </div>
  );
}

// ---- page ----

export default function App() {
  return (
    <div className="relative flex h-[1080px] w-[1920px] flex-col overflow-hidden bg-[#e6e6e6] [font-family:Roboto,sans-serif]">
      <TitleBar />
      <TabRow />
      <Ribbon />
      <Workspace />
      <StatusBar />
      <Taskbar />
      {/* pen strokes from the presenter */}
      <svg width="130" height="110" className="absolute left-0 top-[195px]" fill="none" stroke="#e8202a" strokeWidth="2.500" strokeLinecap="round">
        <path d="M63 3C60 18 58 32 56 45" />
        <path d="M20 57C38 74 62 90 113 100" />
      </svg>
      {/* mouse pointer */}
      <svg width="24" height="32" className="absolute left-[484px] top-[583px]">
        <path d="M3 2L20 19L13 20L16 26L11 28L8 21L3 26Z" fill="#bfef00" stroke="#111" strokeWidth="1.800" />
      </svg>
    </div>
  );
}
